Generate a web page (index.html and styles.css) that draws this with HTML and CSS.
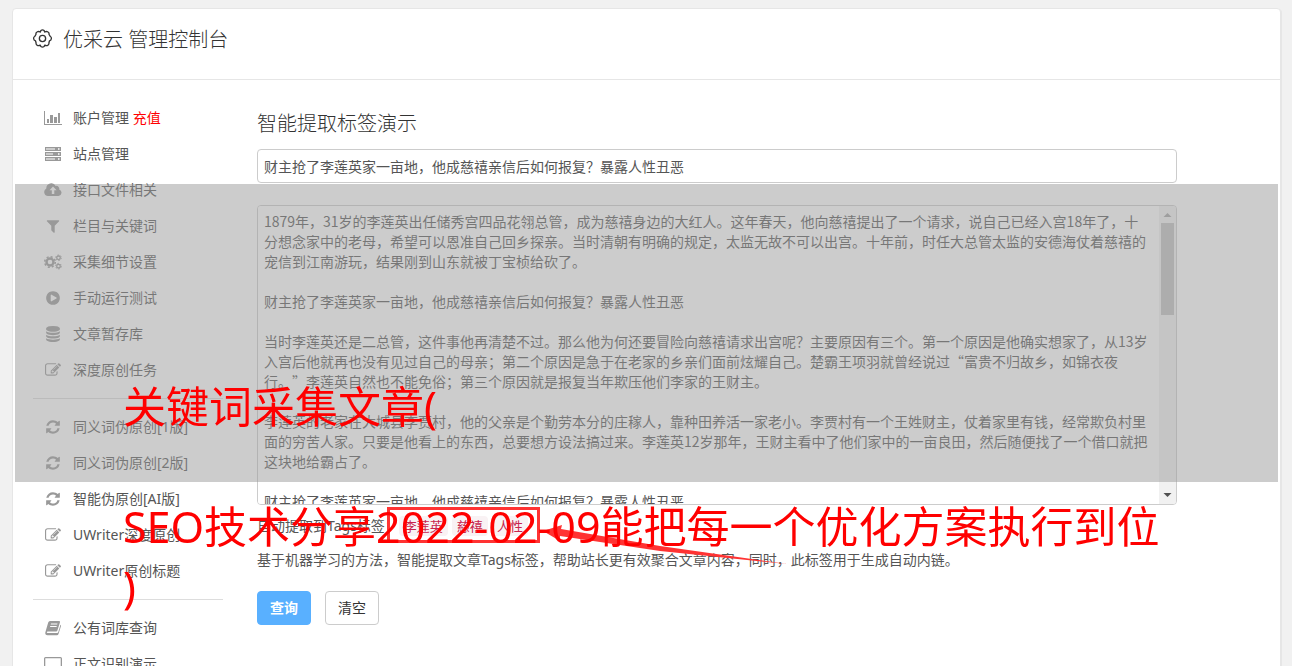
FILE: index.html
```html
<!DOCTYPE html>
<html lang="zh-CN">
  <head>
    <meta charset="UTF-8" />
    <meta name="viewport" content="width=device-width, initial-scale=1.0" />
    <title>优采云 管理控制台</title>
    <link rel="stylesheet" href="styles.css">
  </head>
  <body>
    <!-- icon set -->
    <svg class="sprite" aria-hidden="true">
      <symbol id="gear" viewBox="0 0 20 20">
        <path d="M8.3 1.5Q10 .3 11.700 1.500L12.300 3.200Q14 2.200 15.500 2.900Q17.200 3.500 16.900 5.800L18 7.600Q19.600 8.500 19.300 10.200Q19.200 12 17.300 12.600L16.800 14.500Q17 16.400 15.500 17.200Q14 18 12.400 17L11.700 18.500Q10 19.700 8.300 18.500L7.600 17Q6 18 4.500 17.200Q3 16.400 3.200 14.500L2.700 12.600Q.8 12 .7 10.200Q.4 8.500 2 7.600L3.100 5.800Q2.800 3.500 4.500 2.900Q6 2.200 7.700 3.200z" fill="none" stroke="currentColor" stroke-width="1.4" stroke-linejoin="round" />
        <circle cx="10" cy="10" r="3.3" fill="none" stroke="currentColor" stroke-width="1.4" />
      </symbol>
      <symbol id="chart" viewBox="0 0 18 16">
        <path d="M0 1h1v13h17v1H0zM3 9h2v4H3zM6 5h3v8H6zM10 7h3v6h-3zM14 3h2v10h-2z" />
      </symbol>
      <symbol id="server" viewBox="0 0 18 16">
        <path fill-rule="evenodd" d="M1 1h16v4H1zM2 2.5h9v1H2zM14 2.3h1.5v1.5H14zM1 6h16v4H1zM2 7.5h7v1H2zM14 7.3h1.5v1.5H14zM1 11h16v4H1zM2 12.5h9v1H2zM14 12.3h1.5v1.5H14z" />
      </symbol>
      <symbol id="cloud" viewBox="0 0 18 16">
        <path fill-rule="evenodd" d="M4 14a4 4 0 0 1-1.7-7.5A5 5 0 0 1 11.7 4a2.8 2.8 0 0 1 3.5 3.4A3.4 3.4 0 0 1 14.5 14zM9 4.5L5.5 8.3h2.3V12h2.5V8.3h2.3z" />
      </symbol>
      <symbol id="filter" viewBox="0 0 1792 1792">
        <path d="M1595 295q17 41-14 70l-493 493v742q0 42-39 59-13 5-25 5-27 0-45-19l-256-256q-19-19-19-45v-486l-493-493q-31-29-14-70 17-39 59-39h1280q42 0 59 39z" />
      </symbol>
      <symbol id="cogs" viewBox="0 0 18 16">
        <g fill="none" stroke="currentColor">
          <circle cx="6" cy="8" r="3.5" stroke-width="2.4" />
          <circle cx="6" cy="8" r="5.3" stroke-width="1.5" stroke-dasharray="2.1 2.06" />
          <circle cx="14.5" cy="3.8" r="1.8" stroke-width="1.3" />
          <circle cx="14.5" cy="3.8" r="2.8" stroke-width="1" stroke-dasharray="1.5 1.43" />
          <circle cx="14.5" cy="12.2" r="1.8" stroke-width="1.3" />
          <circle cx="14.5" cy="12.2" r="2.8" stroke-width="1" stroke-dasharray="1.5 1.43" />
        </g>
      </symbol>
      <symbol id="play" viewBox="0 0 1792 1792">
        <path d="M896 128q209 0 385.5 103t279.5 279.5 103 385.5-103 385.5-279.5 279.5-385.5 103-385.5-103-279.5-279.5-103-385.5 103-385.5 279.5-279.5 385.5-103zm384 823q32-18 32-55t-32-55l-544-320q-31-19-64-1-32 19-32 56v640q0 37 32 56 16 8 32 8 17 0 32-9z" />
      </symbol>
      <symbol id="database" viewBox="0 0 1792 1792">
        <path d="M896 768q237 0 443-43t325-127v170q0 69-103 128t-280 93.5-385 34.5-385-34.5-280-93.5-103-128v-170q119 84 325 127t443 43zm0 768q237 0 443-43t325-127v170q0 69-103 128t-280 93.5-385 34.5-385-34.5-280-93.5-103-128v-170q119 84 325 127t443 43zm0-384q237 0 443-43t325-127v170q0 69-103 128t-280 93.5-385 34.5-385-34.5-280-93.5-103-128v-170q119 84 325 127t443 43zm0-1152q208 0 385 34.5t280 93.5 103 128v128q0 69-103 128t-280 93.5-385 34.5-385-34.5-280-93.5-103-128v-128q0-69 103-128t280-93.5 385-34.5z" />
      </symbol>
      <symbol id="edit" viewBox="0 0 1792 1792">
        <path d="M888 1184l116-116-152-152-116 116v56h96v96h56zm440-720q-16-16-33 1l-350 350q-17 17-1 33t33-1l350-350q17-17 1-33zm80 594v190q0 119-84.5 203.5t-203.5 84.5h-832q-119 0-203.5-84.5t-84.5-203.5v-832q0-119 84.5-203.5t203.5-84.5h832q63 0 117 25 15 7 18 23 3 17-9 29l-49 49q-14 14-32 8-23-6-45-6h-832q-66 0-113 47t-47 113v832q0 66 47 113t113 47h832q66 0 113-47t47-113v-126q0-13 9-22l64-64q15-15 35-7t20 29zm-96-738l288 288-672 672h-288v-288zm444 132l-92 92-288-288 92-92q28-28 68-28t68 28l152 152q28 28 28 68t-28 68z" />
      </symbol>
      <symbol id="refresh" viewBox="0 0 1792 1792">
        <path d="M1639 1056q0 5-1 7-64 268-268 434.5t-478 166.5q-146 0-282.5-55t-243.5-157l-129 129q-19 19-45 19t-45-19-19-45v-448q0-26 19-45t45-19h448q26 0 45 19t19 45-19 45l-137 137q71 66 161 102t187 36q134 0 250-65t186-179q11-17 53-117 8-23 30-23h192q13 0 22.5 9.5t9.5 22.5zm25-800v448q0 26-19 45t-45 19h-448q-26 0-45-19t-19-45 19-45l138-138q-148-137-349-137-134 0-250 65t-186 179q-11 17-53 117-8 23-30 23h-199q-13 0-22.5-9.5t-9.5-22.5v-7q65-268 270-434.5t480-166.5q146 0 284 55.5t245 156.5l130-129q19-19 45-19t45 19 19 45z" />
      </symbol>
      <symbol id="book" viewBox="0 0 18 16">
        <path fill-rule="evenodd" d="M6 1h9q1.3 0 1 1.3l-2.6 8.2q-.3 1-1.3 1H3.8q-1 0-1 .8t1 .7h9.4q.7 0 1-.8l2.3-7.5q.8.4.5 1.4l-2.500 8q-.4 1.200-1.600 1.200H3.500Q1 15.300 1.300 12.500L4.200 2.600Q4.700 1 6 1zM7 3.500l-.3 1h6.500l.3-1zM6.300 6L6 7h6.500l.3-1z" />
      </symbol>
      <symbol id="desktop" viewBox="0 0 18 16">
        <path fill-rule="evenodd" d="M1.5 1h15Q18 1 18 2.5v9q0 1.5-1.5 1.5H11v1.5h2v1H5v-1h2V13H1.5Q0 13 0 11.5v-9Q0 1 1.5 1zM1.3 2.3V10h15.4V2.3z" />
      </symbol>
    </svg>

    <div class="panel">
      <header class="panel-head">
        <svg class="gear"><use href="#gear" /></svg>
        <h1>优采云 管理控制台</h1>
      </header>

      <div class="panel-body">
        <nav class="side">
          <a href="#"><svg class="icon wide"><use href="#chart" /></svg><span>账户管理 <em>充值</em></span></a>
          <a href="#"><svg class="icon wide"><use href="#server" /></svg><span>站点管理</span></a>
          <a href="#"><svg class="icon wide"><use href="#cloud" /></svg><span>接口文件相关</span></a>
          <a href="#"><svg class="icon"><use href="#filter" /></svg><span>栏目与关键词</span></a>
          <a href="#"><svg class="icon wide"><use href="#cogs" /></svg><span>采集细节设置</span></a>
          <a href="#"><svg class="icon"><use href="#play" /></svg><span>手动运行测试</span></a>
          <a href="#"><svg class="icon"><use href="#database" /></svg><span>文章暂存库</span></a>
          <a href="#"><svg class="icon"><use href="#edit" /></svg><span>深度原创任务</span></a>
          <hr />
          <a href="#"><svg class="icon"><use href="#refresh" /></svg><span>同义词伪原创[1版]</span></a>
          <a href="#"><svg class="icon"><use href="#refresh" /></svg><span>同义词伪原创[2版]</span></a>
          <a href="#"><svg class="icon"><use href="#refresh" /></svg><span>智能伪原创[AI版]</span></a>
          <a href="#"><svg class="icon"><use href="#edit" /></svg><span>UWriter深度原创</span></a>
          <a href="#"><svg class="icon"><use href="#edit" /></svg><span>UWriter原创标题</span></a>
          <hr />
          <a href="#"><svg class="icon wide"><use href="#book" /></svg><span>公有词库查询</span></a>
          <a href="#"><svg class="icon wide"><use href="#desktop" /></svg><span>正文识别演示</span></a>
        </nav>

        <main class="main">
          <h2 id="pageTitle"><label for="titleInput">智能提取标签演示</label></h2>
          <input type="text" id="titleInput" class="field" value="财主抢了李莲英家一亩地，他成慈禧亲信后如何报复？暴露人性丑恶" />
          <div class="article">
            <textarea id="articleInput" aria-labelledby="pageTitle" spellcheck="false">
1879年，31岁的李莲英出任储秀宫四品花翎总管，成为慈禧身边的大红人。这年春天，他向慈禧提出了一个请求，说自己已经入宫18年了，十分想念家中的老母，希望可以恩准自己回乡探亲。当时清朝有明确的规定，太监无故不可以出宫。十年前，时任大总管太监的安德海仗着慈禧的宠信到江南游玩，结果刚到山东就被丁宝桢给砍了。

财主抢了李莲英家一亩地，他成慈禧亲信后如何报复？暴露人性丑恶

当时李莲英还是二总管，这件事他再清楚不过。那么他为何还要冒险向慈禧请求出宫呢？主要原因有三个。第一个原因是他确实想家了，从13岁入宫后他就再也没有见过自己的母亲；第二个原因是急于在老家的乡亲们面前炫耀自己。楚霸王项羽就曾经说过“富贵不归故乡，如锦衣夜行。”李莲英自然也不能免俗；第三个原因就是报复当年欺压他们李家的王财主。

李莲英的老家在大城县李贾村，他的父亲是个勤劳本分的庄稼人，靠种田养活一家老小。李贾村有一个王姓财主，仗着家里有钱，经常欺负村里面的穷苦人家。只要是他看上的东西，总要想方设法搞过来。李莲英12岁那年，王财主看中了他们家中的一亩良田，然后随便找了一个借口就把这块地给霸占了。

财主抢了李莲英家一亩地，他成慈禧亲信后如何报复？暴露人性丑恶
</textarea>
            <div class="scrollbar" aria-hidden="true">
              <svg width="17" height="17"><path d="M4.5 11l4-4 4 4z" fill="#a3a3a3" /></svg>
              <div class="thumb"></div>
              <svg class="down" width="17" height="17"><path d="M4.5 6h8l-4 4z" fill="#505050" /></svg>
            </div>
          </div>
          <div class="tags">
            <span>自动提取到Tags标签：</span>
            <div class="tag-list">
              <code>李莲英</code>
              <code>慈禧</code>
              <code>人性</code>
            </div>
          </div>
          <p class="help">基于机器学习的方法，智能提取文章Tags标签，帮助站长更有效聚合文章内容，同时，此标签用于生成自动内链。</p>
          <div class="buttons">
            <button type="button" class="btn btn-primary">查询</button>
            <button type="button" class="btn">清空</button>
          </div>
        </main>
      </div>
    </div>

    <!-- red box and arrow pointing at the tags -->
    <svg class="marker" width="410" height="66" viewBox="0 0 410 66" aria-hidden="true">
      <rect x="5.5" y="4.5" width="150" height="33" fill="none" stroke="#f33" stroke-width="3" />
      <path d="M160 27l19-6-1 4 99 17 127 18-127-13-100-15v5z" fill="#f33" />
    </svg>

    <div class="band"></div>
    <div class="caption">关键词采集文章(<br /><br />SEO技术分享2022-02-09能把每一个优化方案执行到位<br />)</div>
  </body>
</html>
```

FILE: styles.css
```css
* {
  box-sizing: border-box;
}

body {
  position: relative;
  height: 100vh;
  margin: 0;
  overflow: hidden;
  background-color: #f1f1f1;
  color: #555;
  font-family: "Noto Sans", "Noto Sans CJK SC", sans-serif;
  font-size: 14px;
  line-height: 20px;
  text-spacing-trim: space-all;
}

.sprite {
  display: none;
}

.panel {
  margin: 8px 11px 0 12px;
  background-color: #fff;
  border: 1px solid #e6e6e6;
  border-radius: 4px;
  box-shadow: 1px 1px 0 #e6e6e6;
}

.panel-head {
  display: flex;
  align-items: center;
  gap: 11px;
  padding: 16px 20px 24px;
  border-bottom: 1px solid #e6e6e6;
  color: #333;
}

.gear {
  width: 19px;
  height: 19px;
  margin-bottom: 3px;
}

h1,
h2 {
  margin: 0;
  color: #333;
  font-size: 20px;
  font-weight: 300;
  line-height: 30px;
}

.panel-body {
  display: flex;
  gap: 34px;
  padding: 20px 103px 20px 20px;
}

/* left menu */
.side {
  flex: 0 0 190px;
}

.side a {
  display: flex;
  align-items: center;
  gap: 10px;
  padding: 8px 10px;
  color: #555;
  text-decoration: none;
}

.side em {
  color: #f00;
  font-style: normal;
}

.side hr {
  margin: 10px 0;
  border: 0;
  border-top: 1px solid #ddd;
}

.icon {
  width: 16px;
  height: 16px;
  margin: 0 2px;
  color: #999;
  fill: currentColor;
}

.icon.wide {
  width: 18px;
  margin: 0 1px;
}

/* form */
.main {
  flex: 1;
  min-width: 0;
  padding-top: 9px;
}

.field,
.article textarea {
  padding: 6px;
  background-color: #fff;
  color: #555;
  font-family: "Noto Sans CJK SC", sans-serif;
  font-size: 14px;
  line-height: 20px;
  text-spacing-trim: space-all;
}

.field,
.article {
  display: block;
  width: 100%;
  height: 34px;
  margin: 10px 0 22px;
  border: 1px solid #ccc;
  border-radius: 4px;
}

.article {
  display: flex;
  height: 300px;
  margin: 0 0 11px;
  overflow: hidden;
}

.article textarea {
  flex: 1;
  padding: 5px 10px 6px 6px;
  border: 0;
  resize: none;
}

.scrollbar {
  display: flex;
  flex-direction: column;
  width: 17px;
  background-color: #f1f1f1;
}

.scrollbar .thumb {
  height: 92px;
  margin: 0 2px;
  background-color: #c1c1c1;
}

.scrollbar .down {
  margin-top: auto;
}

.tags,
.tag-list {
  display: flex;
  align-items: center;
}

.tag-list {
  gap: 4px;
}

.tags code {
  padding: 0 5px;
  background-color: #f9f2f4;
  border-radius: 4px;
  color: #c7254e;
  font-family: "Noto Sans CJK SC", monospace;
  font-size: 13px;
}

.help {
  margin: 14px 0 21px;
}

.buttons {
  display: flex;
  gap: 14px;
}

.btn {
  height: 34px;
  padding: 6px 12px;
  background-color: #fff;
  border: 1px solid #ccc;
  border-radius: 4px;
  color: #333;
  font: inherit;
  cursor: pointer;
}

.btn-primary {
  background-color: #59b0ff;
  border-color: #59b0ff;
  color: #fff;
  font-weight: bold;
}

/* layers over the page */
.band,
.marker,
.caption {
  position: absolute;
  pointer-events: none;
}

.band {
  top: 184px;
  right: 14px;
  left: 15px;
  height: 298px;
  background-color: rgba(153, 153, 153, 0.5);
}

.marker {
  top: 504px;
  left: 383px;
}

.caption {
  top: 377px;
  left: 123px;
  color: #f00;
  font-size: 43px;
  line-height: 60px;
  white-space: nowrap;
}
```
